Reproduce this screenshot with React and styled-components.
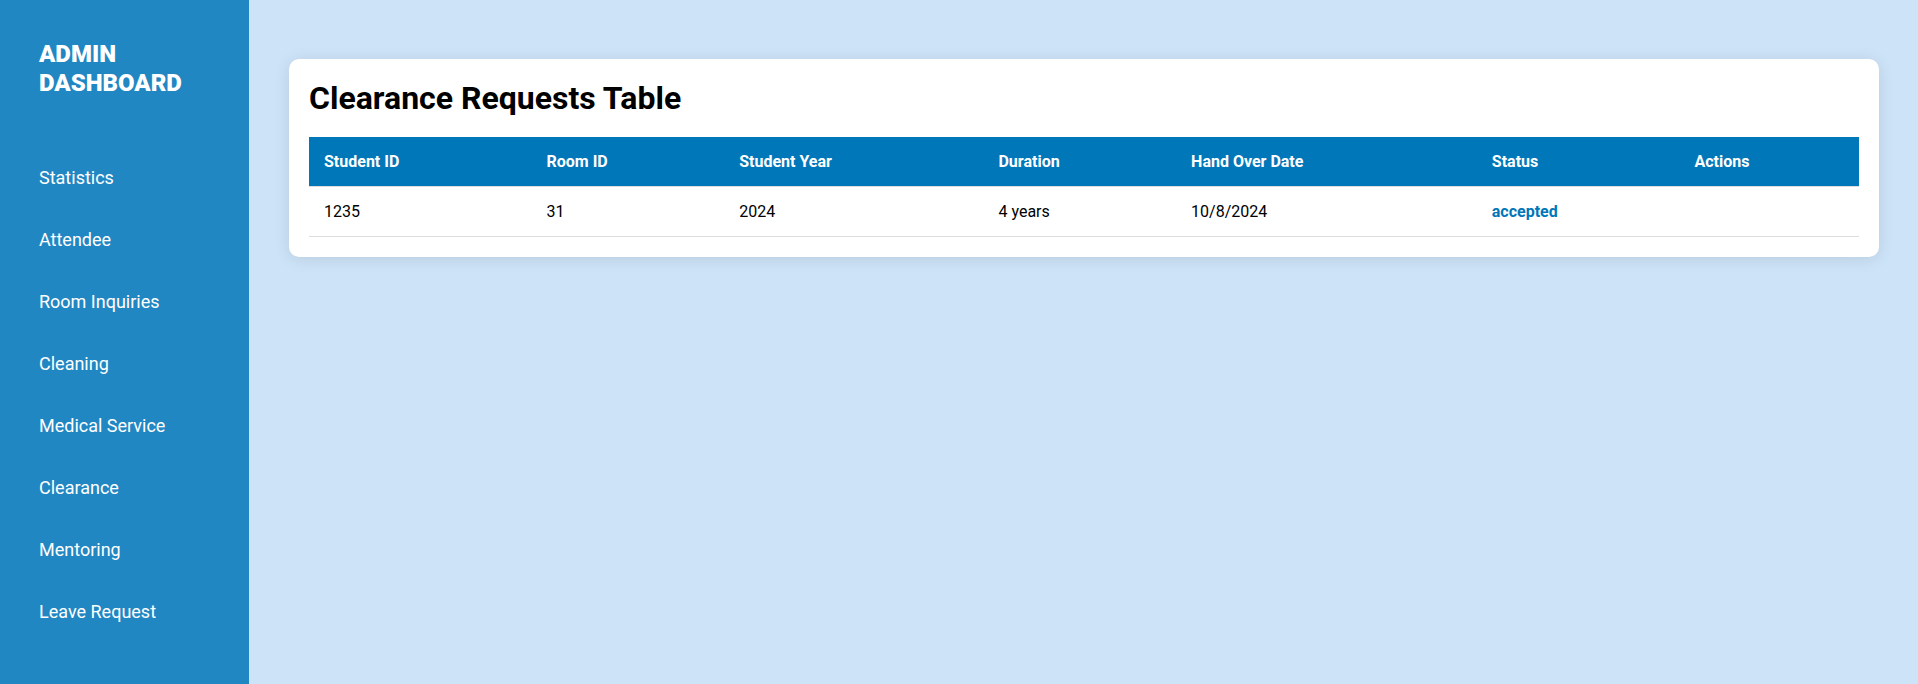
import React from "react";
import styled, { createGlobalStyle } from "styled-components";

const GlobalStyle = createGlobalStyle`
  *, *::before, *::after { box-sizing: border-box; }
  body {
    margin: 0;
    background: #cde3f7;
    font-family: Roboto, "Liberation Sans", sans-serif;
    color: #000;
  }
`;

const Layout = styled.div`
  display: flex;
  min-height: 100vh;
`;

const Sidebar = styled.aside`
  flex: 0 0 249px;
  padding: 40px 39px;
  background: #2187c3;
  color: #fff;
`;

const Brand = styled.h1`
  margin: 0 0 59px;
  font-size: 24px;
  line-height: 29px;
  font-weight: 900;
`;

const NavList = styled.ul`
  display: flex;
  flex-direction: column;
  gap: 20px;
  margin: 0;
  padding: 0;
  list-style: none;
`;

const NavLink = styled.a`
  display: block;
  padding: 10px 0;
  color: inherit;
  font-size: 18px;
  line-height: 22px;
  text-decoration: none;
`;

const Main = styled.main`
  flex: 1;
  min-width: 0;
  padding: 59px 39px 40px 40px;
`;

const Card = styled.section`
  padding: 20px;
  border-radius: 10px;
  background: #fff;
  box-shadow: 0 2px 16px rgba(0, 0, 0, 0.1);
`;

const Title = styled.h2`
  margin: 0 0 20px;
  font-size: 32px;
  line-height: 38px;
  font-weight: 700;
`;

const Table = styled.table`
  width: 100%;
  border-collapse: collapse;
  font-size: 16px;
  line-height: 19px;
`;

const HeadCell = styled.th`
  padding: 15px;
  border-bottom: 1px solid #ddd;
  background: #0077b9;
  color: #fff;
  font-weight: 700;
  text-align: left;
`;

const Cell = styled.td`
  padding: 15px;
  border-bottom: 1px solid #ddd;
`;

const Status = styled.span`
  color: #0077b9;
  font-weight: 700;
`;

const links = [
  "Statistics",
  "Attendee",
  "Room Inquiries",
  "Cleaning",
  "Medical Service",
  "Clearance",
  "Mentoring",
  "Leave Request",
];

const columns = ["Student ID", "Room ID", "Student Year", "Duration", "Hand Over Date", "Status", "Actions"];

const requests = [
  { id: "1235", room: "31", year: "2024", duration: "4 years", date: "10/8/2024", status: "accepted" },
];

export default function App() {
  return (
    <Layout>
      <GlobalStyle />
      <Sidebar>
        <Brand>ADMIN DASHBOARD</Brand>
        <nav>
          <NavList>
            {links.map((label) => (
              <li key={label}>
                <NavLink href="#">{label}</NavLink>
              </li>
            ))}
          </NavList>
        </nav>
      </Sidebar>
      <Main>
        <Card>
          <Title>Clearance Requests Table</Title>
          <Table>
            <thead>
              <tr>
                {columns.map((name) => (
                  <HeadCell key={name} scope="col">{name}</HeadCell>
                ))}
              </tr>
            </thead>
            <tbody>
              {requests.map((r) => (
                <tr key={r.id}>
                  <Cell>{r.id}</Cell>
                  <Cell>{r.room}</Cell>
                  <Cell>{r.year}</Cell>
                  <Cell>{r.duration}</Cell>
                  <Cell>{r.date}</Cell>
                  <Cell><Status>{r.status}</Status></Cell>
                  <Cell />
                </tr>
              ))}
            </tbody>
          </Table>
        </Card>
      </Main>
    </Layout>
  );
}
